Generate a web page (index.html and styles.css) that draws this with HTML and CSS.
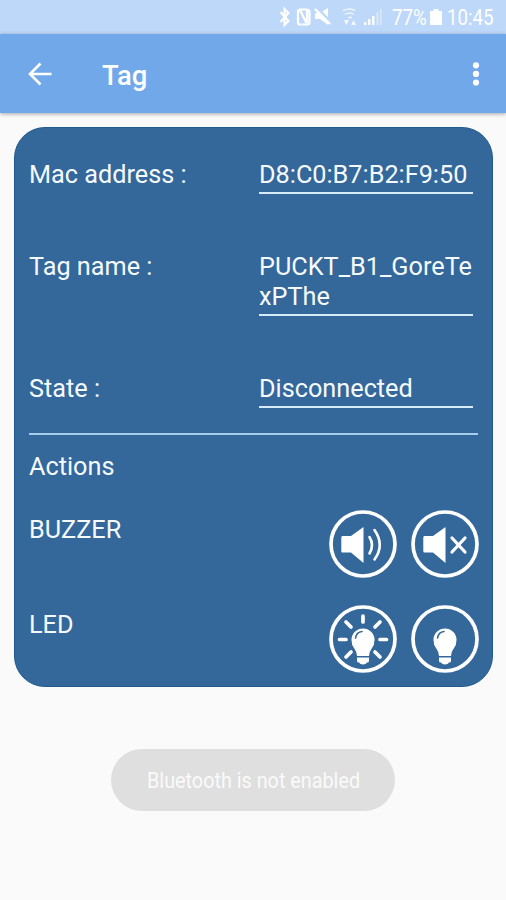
FILE: index.html
```html
<!DOCTYPE html>
<html lang="en">
<head>
<meta charset="utf-8">
<title>Tag</title>
<link rel="stylesheet" href="styles.css">
</head>
<body>
<div class="status">
  <svg class="status-icons" width="122" height="34" viewBox="0 0 122 34" fill="#fff">
    <path d="M3.500 12l8 9-4 4V9l4 4-8 9" fill="none" stroke="#fff" stroke-width="2.100"/>
    <path d="M21 9.500h7.500q3 0 3 2.500v10q0 2.500-2.500 2.500h-5.500M29 9.500v13M23 24.500h-1q-2 0-2-2V9.500M22 10l6.500 13" fill="none" stroke="#fff" stroke-width="2.200" transform="translate(1 0)"/>
    <path d="M38 13h5l8-5v17l-8-6h-5z"/>
    <path d="M39 7l15 15" stroke="#bed8f9" stroke-width="2.500"/>
    <path d="M38 9l15 15" stroke="#fff" stroke-width="2.400"/>
    <g fill="none" stroke="#fff" stroke-width="1.500" opacity=".75"><path d="M66 10.500q7-3 12 0M68 14.500q4.500-3 9 0M71 17.500h4"/></g>
    <path d="M67 20h5l-2.500 5zM74 25h5l-2.500-5z" opacity=".85"/>
    <path d="M87 25v-3h2.500v3zM91 25v-6h2.500v6zM95 25V16h2.500v9z" opacity=".9"/>
    <path d="M99.500 25V12h2v13zM103 25V9h1.500v16z" opacity=".45"/>
  </svg>
  <span class="percent"><span class="narrow">77%</span></span>
  <svg class="battery" width="12" height="34" viewBox="0 0 12 34"><path d="M3.500 9h5v2H12v14H0V11h3.500z" fill="#fff"/></svg>
  <span class="clock"><span class="narrow">10:45</span></span>
</div>
<header class="bar">
  <svg class="back" width="24" height="24" viewBox="0 0 24 24" fill="none" stroke="#fff" stroke-width="2.600"><path d="M12.500 1.500L2 12l10.500 10.500M2 12h21.500"/></svg>
  <h1 class="title">Tag</h1>
  <svg class="more" width="8" height="26" viewBox="0 0 8 26" fill="#fff"><circle cx="4" cy="4.300" r="3.100"/><circle cx="4" cy="12.900" r="3.100"/><circle cx="4" cy="21.500" r="3.100"/></svg>
</header>
<main class="card">
  <div class="row"><span class="label">Mac address :</span><span class="value">D8:C0:B7:B2:F9:50</span></div>
  <div class="row"><span class="label">Tag name :</span><span class="value">PUCKT_B1_GoreTe<br>xPThe</span></div>
  <div class="row"><span class="label">State :</span><span class="value">Disconnected</span></div>
  <hr class="divider">
  <div class="heading">Actions</div>
  <div class="action">
    <span>BUZZER</span>
    <div class="buttons">
      <svg width="68" height="68" viewBox="0 0 68 68">
        <circle class="ring" cx="34" cy="34" r="32"/>
        <path d="M13.500 26H22L34.500 17V53L22 42.500H13.500Q12.300 42.500 12.300 41V27.500Q12.300 26 13.500 26z" fill="#fff"/>
        <path class="line" d="M40.500 27Q45.500 35 40.500 43.500M45.500 20Q56 35 45.500 49.500"/>
      </svg>
      <svg width="68" height="68" viewBox="0 0 68 68">
        <circle class="ring" cx="34" cy="34" r="32"/>
        <path d="M13.500 26H22L34.500 17V53L22 42.500H13.500Q12.300 42.500 12.300 41V27.500Q12.300 26 13.500 26z" fill="#fff"/>
        <path class="line cross" d="M41 28L54 42M54 28L41 42"/>
      </svg>
    </div>
  </div>
  <div class="action led">
    <span>LED</span>
    <div class="buttons">
      <svg width="68" height="68" viewBox="0 0 68 68">
        <circle class="ring" cx="34" cy="34" r="32"/>
        <path class="line ray" d="M34 11V17M17 17L22 22M51 17L46 22M10.500 34.500H17M51 34.500H57.500M22 47L17 52M46 47L51 52"/>
        <path d="M28 51Q28 47 25 43Q22.500 40 22.500 35A11.500 11.500 0 0 1 45.500 35Q45.500 40 43 43Q40 47 40 51zM28 52.500H40V56Q40 57.500 38 57.500Q37 59.500 34 59.500Q31 59.500 30 57.500Q28 57.500 28 56z" fill="#fff"/>
        <path class="shine" d="M26.500 33Q27.500 27 33 26.500"/>
      </svg>
      <svg width="68" height="68" viewBox="0 0 68 68">
        <circle class="ring" cx="34" cy="34" r="32"/>
        <path d="M28 51Q28 47 25 43Q22.500 40 22.500 35A11.500 11.500 0 0 1 45.500 35Q45.500 40 43 43Q40 47 40 51zM28 52.500H40V56Q40 57.500 38 57.500Q37 59.500 34 59.500Q31 59.500 30 57.500Q28 57.500 28 56z" fill="#fff"/>
        <path class="shine" d="M26.500 33Q27.500 27 33 26.500"/>
      </svg>
    </div>
  </div>
</main>
<div class="toast"><span class="toast-text">Bluetooth is not enabled</span></div>
</body>
</html>
```
FILE: styles.css
```css
* { box-sizing: border-box; }
body { margin: 0; height: 900px; background: #fafafa; font-family: Roboto, sans-serif; overflow: hidden; }
svg { display: block; flex: none; }
.status { height: 34px; background: #bed8f9; display: flex; padding-left: 277px; color: #fff; font-size: 21.5px; line-height: 35px; }
.status-icons { margin-right: -7px; }
.percent { width: 38px; white-space: nowrap; }
.clock { margin-left: 5px; white-space: nowrap; }
.narrow { display: inline-block; transform: scaleX(.87); transform-origin: 0 50%; }
.bar { height: 79px; background: #71a8ea; display: flex; align-items: center; padding: 0 26px 0 28px; box-shadow: 0 1px 4px rgba(0, 0, 0, .35); }
.title { margin: 4px 0 0 50px; flex: 1; color: #fff; font-size: 27.4px; font-weight: 500; line-height: 32px; }
.card { margin: 14px 13px 0 14px; height: 560px; padding: 32px 14px 0; border: 1px solid #205b91; border-radius: 31px; background: #34679a; color: #f5faff; font-size: 25.25px; line-height: 30px; }
.row { display: flex; margin-bottom: 58px; }
.label { width: 230px; }
.value { width: 214px; padding-bottom: 2px; border-bottom: 2px solid #d8ebfa; white-space: nowrap; }
.divider { margin: -33px 0 0; border: 0; height: 2px; background: #a6cdea; }
.heading { margin-top: 17px; }
.action { display: flex; justify-content: space-between; height: 68px; margin: 28px -1px 0 0; }
.action.led { margin-top: 27px; }
.action > span { padding-top: 5px; }
.buttons { display: flex; gap: 14px; }
.ring { fill: none; stroke: #fff; stroke-width: 3.7; }
.line { fill: none; stroke: #fff; stroke-width: 2.6; stroke-linecap: round; }
.cross { stroke-width: 3.2; }
.ray { stroke-width: 3.7; }
.shine { fill: none; stroke: #34679a; stroke-width: 1.6; stroke-linecap: round; }
.toast { width: 284px; height: 62px; margin: 62px 0 0 111px; border-radius: 31px; background: #dfdfdf; color: #fafafa; display: flex; align-items: center; padding-left: 36px; font-size: 22px; white-space: nowrap; }
.toast-text { transform: scaleX(.9); transform-origin: 0 50%; }
```
